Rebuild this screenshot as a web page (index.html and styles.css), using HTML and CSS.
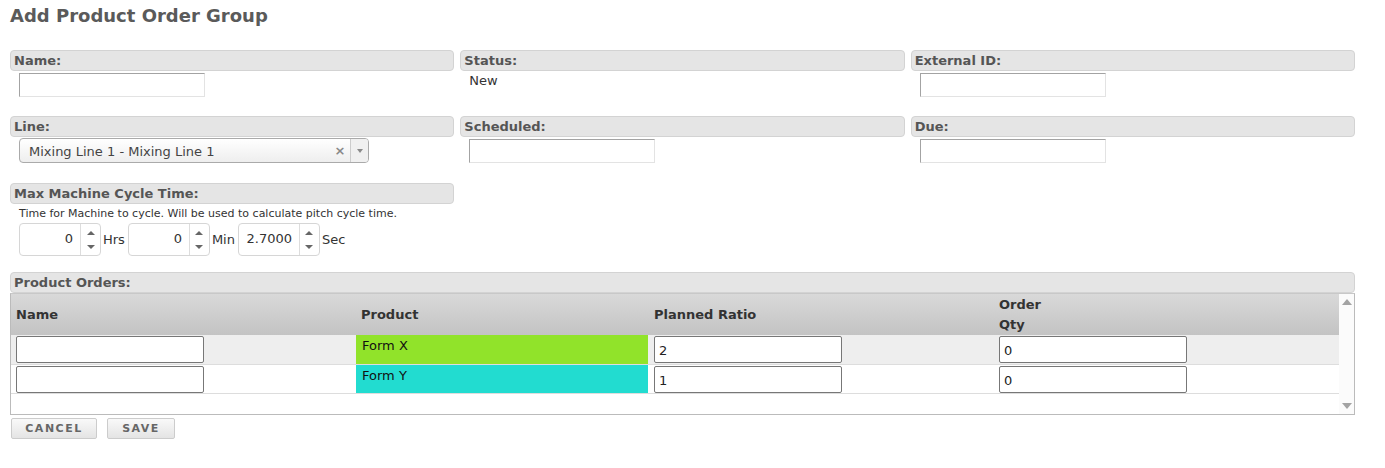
FILE: index.html
```html
<!DOCTYPE html>
<html>
<head>
<meta charset="utf-8">
<title>Add Product Order Group</title>
<link rel="stylesheet" href="styles.css">
</head>
<body>
<div class="page">
  <h1 class="title">Add Product Order Group</h1>

  <div class="form-row row-1">
    <div class="field">
      <div class="field-label">Name:</div>
      <div class="field-body"><input class="text-input" type="text"></div>
    </div>
    <div class="field">
      <div class="field-label">Status:</div>
      <div class="field-body"><span class="static-text">New</span></div>
    </div>
    <div class="field">
      <div class="field-label">External ID:</div>
      <div class="field-body"><input class="text-input" type="text"></div>
    </div>
  </div>

  <div class="form-row row-2">
    <div class="field">
      <div class="field-label">Line:</div>
      <div class="field-body">
        <div class="select">
          <span class="select-text">Mixing Line 1 - Mixing Line 1</span>
          <span class="select-clear">×</span>
          <span class="select-arrow"><span class="tri-down-small"></span></span>
        </div>
      </div>
    </div>
    <div class="field">
      <div class="field-label">Scheduled:</div>
      <div class="field-body"><input class="text-input" type="text"></div>
    </div>
    <div class="field">
      <div class="field-label">Due:</div>
      <div class="field-body"><input class="text-input" type="text"></div>
    </div>
  </div>

  <div class="form-row row-3">
    <div class="field">
      <div class="field-label">Max Machine Cycle Time:</div>
      <div class="field-body">
        <div class="help">Time for Machine to cycle. Will be used to calculate pitch cycle time.</div>
        <div class="spinners">
          <span class="spinner"><span class="spin-val">0</span><span class="spin-btns"><span class="spin-up"></span><span class="spin-down"></span></span></span><span class="unit">Hrs</span>
          <span class="spinner"><span class="spin-val">0</span><span class="spin-btns"><span class="spin-up"></span><span class="spin-down"></span></span></span><span class="unit">Min</span>
          <span class="spinner"><span class="spin-val">2.7000</span><span class="spin-btns"><span class="spin-up"></span><span class="spin-down"></span></span></span><span class="unit">Sec</span>
        </div>
      </div>
    </div>
  </div>

  <div class="orders-section">
    <div class="field-label">Product Orders:</div>
    <div class="orders">
      <div class="orders-main">
        <table class="orders-table">
          <colgroup>
            <col class="c-name"><col class="c-product"><col class="c-ratio"><col class="c-qty">
          </colgroup>
          <thead>
            <tr>
              <th>Name</th>
              <th>Product</th>
              <th>Planned Ratio</th>
              <th>Order<br>Qty</th>
            </tr>
          </thead>
          <tbody>
            <tr class="alt">
              <td><input class="cell-input" type="text"></td>
              <td class="product product-x">Form X</td>
              <td><input class="cell-input" type="text" value="2"></td>
              <td><input class="cell-input" type="text" value="0"></td>
            </tr>
            <tr>
              <td><input class="cell-input" type="text"></td>
              <td class="product product-y">Form Y</td>
              <td><input class="cell-input" type="text" value="1"></td>
              <td><input class="cell-input" type="text" value="0"></td>
            </tr>
          </tbody>
        </table>
      </div>
      <div class="vscroll">
        <span class="sc-up"></span>
        <span class="sc-down"></span>
      </div>
    </div>
  </div>

  <div class="actions">
    <button class="btn btn-cancel" type="button">CANCEL</button>
    <button class="btn btn-save" type="button">SAVE</button>
  </div>
</div>
</body>
</html>
```

FILE: styles.css
```css
* { box-sizing: border-box; }

html, body {
  margin: 0;
  padding: 0;
  background: #ffffff;
}

body {
  font-family: Verdana, "DejaVu Sans", sans-serif;
  font-size: 13px;
  color: #333333;
}

.page {
  width: 1355px;
  padding: 0 0 0 10px;
}

.title {
  margin: 0;
  padding-top: 5px;
  font-size: 18px;
  line-height: 22px;
  font-weight: bold;
  color: #5a5a5a;
}

.form-row {
  display: grid;
  grid-template-columns: repeat(3, 1fr);
  column-gap: 6px;
}

.row-1 { margin-top: 23px; margin-bottom: 19px; }
.row-2 { margin-bottom: 20px; }
.row-3 { margin-bottom: 16px; }

.field-label {
  height: 21px;
  padding: 0 3px;
  border: 1px solid #d3d3d3;
  border-radius: 4px;
  background: #e5e5e5;
  font-weight: bold;
  font-size: 13px;
  line-height: 19px;
  color: #555555;
}

.field-body {
  padding: 2px 0 0 9px;
}

.text-input {
  display: block;
  width: 186px;
  height: 24px;
  margin: 0;
  padding: 0 4px;
  border: 1px solid;
  border-color: #a3a3a3 #e3e3e3 #e3e3e3 #a3a3a3;
  background: #ffffff;
  font-family: inherit;
  font-size: 13px;
}

.static-text {
  display: block;
  line-height: 14px;
  padding-top: 1px;
  color: #333333;
}

/* select */
.select {
  display: flex;
  align-items: center;
  width: 350px;
  height: 25px;
  margin-top: -1px;
  border: 1px solid #aaaaaa;
  border-radius: 4px;
  background: linear-gradient(#ffffff, #eeeeee);
  overflow: hidden;
}

.select-text {
  flex: 1;
  padding-left: 9px;
  padding-top: 1px;
  color: #444444;
  font-size: 13px;
}

.select-clear {
  width: 14px;
  margin-right: 3px;
  color: #888888;
  font-weight: bold;
  font-size: 13px;
  text-align: center;
}

.select-arrow {
  display: flex;
  align-items: center;
  justify-content: center;
  width: 18px;
  height: 100%;
  border-left: 1px solid #cccccc;
  background: #f0f0f0;
}

.tri-down-small {
  width: 0;
  height: 0;
  border-left: 3px solid transparent;
  border-right: 3px solid transparent;
  border-top: 4px solid #8a8a8a;
}

/* help + spinners */
.help {
  font-size: 11px;
  line-height: 13px;
  padding-top: 1px;
  color: #333333;
}

.spinners {
  display: flex;
  align-items: center;
  margin-top: 3px;
}

.spinner {
  display: flex;
  width: 82px;
  height: 33px;
  border: 1px solid #d6d6d6;
  border-radius: 4px;
  background: #ffffff;
}

.spin-val {
  flex: 1;
  text-align: right;
  padding-right: 7px;
  line-height: 30px;
  font-size: 13px;
  color: #333333;
}

.spin-btns {
  display: flex;
  flex-direction: column;
  width: 20px;
  border-left: 1px solid #dddddd;
}

.spin-up, .spin-down {
  flex: 1;
  display: flex;
  align-items: center;
  justify-content: center;
}

.spin-up::before {
  content: "";
  width: 0;
  height: 0;
  border-left: 4px solid transparent;
  border-right: 4px solid transparent;
  border-bottom: 4px solid #666666;
  margin-top: 3px;
}

.spin-down::before {
  content: "";
  width: 0;
  height: 0;
  border-left: 4px solid transparent;
  border-right: 4px solid transparent;
  border-top: 4px solid #666666;
  margin-bottom: 1px;
}

.unit {
  margin: 0 3px 0 2px;
  font-size: 13px;
  color: #333333;
}

/* product orders */
.orders-section {
  width: 1345px;
}

.orders {
  display: flex;
  height: 122px;
  border: 1px solid #bbbbbb;
  border-top-color: #c8c8c8;
}

.orders-main {
  flex: 1;
  overflow: hidden;
}

.orders-table {
  width: 100%;
  border-collapse: collapse;
  table-layout: fixed;
}

.c-name { width: 345px; }
.c-product { width: 292px; }
.c-ratio { width: 346px; }
.c-qty { width: auto; }

.orders-table th {
  height: 41px;
  padding: 0 5px;
  text-align: left;
  vertical-align: middle;
  font-weight: bold;
  font-size: 13px;
  line-height: 20px;
  color: #333333;
  background: linear-gradient(#d9d9d9, #c3c3c3);
}

.orders-table th:nth-child(3) { padding-left: 6px; }

.orders-table td {
  height: 29px;
  padding: 1px 5px 0;
  vertical-align: top;
  border-bottom: 1px solid #dddddd;
}

.orders-table tr.alt td {
  background: #eeeeee;
}

.orders-table td.product {
  padding: 3px 6px 0;
  color: #111111;
  font-size: 13px;
  line-height: 15px;
}

.orders-table tr td.product-x { background: #91e32a; }
.orders-table tr td.product-y { background: #22dcd0; }

.orders-table td:nth-child(3) { padding-left: 6px; }

.cell-input {
  display: block;
  width: 188px;
  height: 27px;
  margin: 0;
  padding: 2px 4px 0;
  border: 1px solid #777777;
  border-radius: 2px;
  background: #ffffff;
  font-family: inherit;
  font-size: 13px;
  color: #222222;
}

.vscroll {
  position: relative;
  width: 15px;
  background: #fbfbfb;
}

.sc-up, .sc-down {
  position: absolute;
  left: 3px;
  width: 0;
  height: 0;
  border-left: 5px solid transparent;
  border-right: 5px solid transparent;
}

.sc-up {
  top: 5px;
  border-bottom: 6px solid #a3a3a3;
}

.sc-down {
  bottom: 5px;
  border-top: 6px solid #a3a3a3;
}

/* buttons */
.actions {
  display: flex;
  gap: 10px;
  margin-top: 3px;
  padding-left: 1px;
}

.btn {
  height: 21px;
  margin: 0;
  padding: 0;
  border: 1px solid #cccccc;
  border-radius: 2px;
  background: linear-gradient(#f9f9f9, #e4e4e4);
  font-family: inherit;
  font-weight: bold;
  font-size: 11px;
  letter-spacing: 1.5px;
  color: #666666;
}

.btn-cancel { width: 86px; }
.btn-save { width: 68px; }
```
